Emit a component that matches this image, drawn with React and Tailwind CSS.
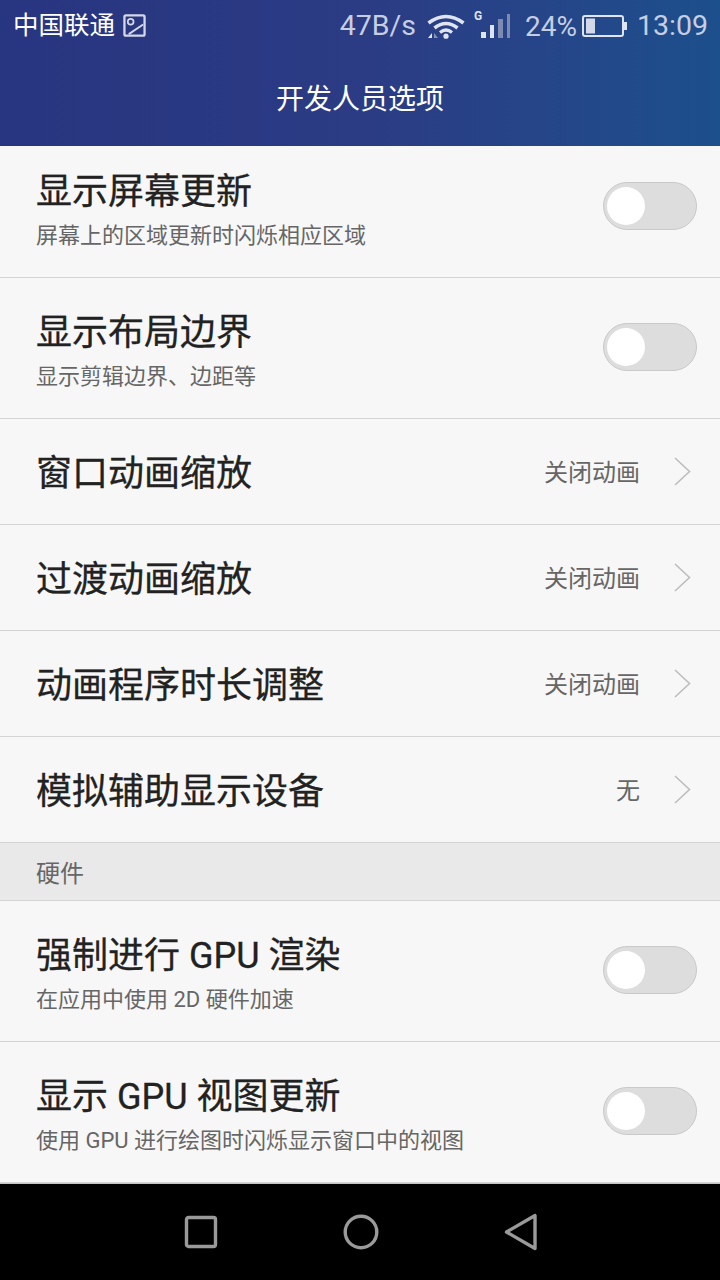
const font = { fontFamily: '"Roboto", "Noto Sans CJK SC", sans-serif' };

const Toggle = ({ lift }) => (
  <div className={`w-[94px] h-[48px] rounded-full bg-[#dddddd] border border-[#c9c9c9] flex items-center pl-[3px] shrink-0 ${lift}`}>
    <div className="w-[38px] h-[38px] rounded-full bg-white" />
  </div>
);

const Chevron = () => (
  <svg width="17" height="29" viewBox="0 0 17 29" className="shrink-0">
    <path d="M1 1 L15.5 14.5 L1 28" fill="none" stroke="#bdbdbd" strokeWidth="1.6" />
  </svg>
);

const SwitchRow = ({ title, sub, height, top, lift }) => (
  <div className={`flex items-center justify-between pl-9 pr-[23px] border-b border-[#d4d4d4] ${height}`}>
    <div className={`flex flex-col ${top}`}>
      <span className="text-[36px] leading-[44px] text-[#222222] [-webkit-text-stroke:0.3px_#222222]">{title}</span>
      <span className="text-[22px] leading-[30px] mt-[7px] text-[#666666]">{sub}</span>
    </div>
    <Toggle lift={lift} />
  </div>
);

const ValueRow = ({ title, value }) => (
  <div className="flex items-center justify-between h-[106px] pl-9 pr-[29px] border-b border-[#d4d4d4]">
    <span className="text-[36px] leading-[44px] pt-1 text-[#222222] [-webkit-text-stroke:0.3px_#222222]">{title}</span>
    <div className="flex items-center gap-[34px]">
      <span className="text-[24px] pt-[3px] text-[#666666]">{value}</span>
      <Chevron />
    </div>
  </div>
);

const StatusBar = () => (
  <div className="h-[50px] flex items-center justify-between pl-[13px] pr-[12px] text-[28.5px]">
    <div className="flex items-center gap-[8px] text-white">
      <span className="text-[25.5px] leading-[50px]">中国联通</span>
      <svg width="23" height="23" viewBox="0 0 24 24" className="opacity-80">
        <rect x="1.5" y="1.5" width="21" height="21" rx="1.5" fill="none" stroke="#fff" strokeWidth="2.4" />
        <circle cx="8" cy="8" r="3" fill="none" stroke="#fff" strokeWidth="1.8" />
        <path d="M6 21 L21 11" fill="none" stroke="#fff" strokeWidth="2" />
      </svg>
    </div>
    <div className="flex items-center text-[#c6cee2]">
      <span className="pt-[3px]">47B/s</span>
      <svg width="38" height="25" viewBox="0 0 38 25" className="ml-[11px] mt-[2px]">
        <path d="M1.5 9 Q19 -4 36.5 9" fill="none" stroke="#dfe4f0" strokeWidth="3.6" />
        <path d="M7.5 14 Q19 5 30.5 14" fill="none" stroke="#dfe4f0" strokeWidth="3.6" />
        <path d="M13 18.5 Q19 13.5 25 18.5" fill="none" stroke="#dfe4f0" strokeWidth="3.2" />
        <circle cx="19" cy="22.2" r="2.6" fill="#dfe4f0" />
        <path d="M5 19 L5 24 L1 24 Z" fill="#dfe4f0" />
        <path d="M7 19 L11 24 L7 24 Z" fill="#8793b5" />
      </svg>
      <svg width="36" height="32" viewBox="0 -4 36 32" className="ml-[9px] -mt-[5px]">
        <text x="0" y="9" fontSize="12" fontWeight="700" fill="#dfe4f0" fontFamily="Roboto, sans-serif">G</text>
        <rect x="7" y="21" width="5" height="6" fill="#dfe4f0" />
        <rect x="16" y="14" width="4" height="13" fill="#dfe4f0" />
        <rect x="24" y="8" width="5" height="19" fill="#7d8bb0" />
        <rect x="33" y="3" width="3" height="24" fill="#7d8bb0" />
      </svg>
      <span className="ml-[15px] pt-[3px] text-[28px]">24%</span>
      <svg width="45" height="22" viewBox="0 0 45 22" className="ml-[5px] mt-[1px]">
        <rect x="1" y="1" width="40" height="20" rx="2" fill="none" stroke="#dfe4f0" strokeWidth="2" />
        <rect x="4" y="3.5" width="9" height="15" fill="#d3d9e8" />
        <rect x="42" y="7" width="3" height="8" fill="#dfe4f0" />
      </svg>
      <span className="ml-[10px] pt-[3px]">13:09</span>
    </div>
  </div>
);

const NavBar = () => (
  <div className="h-[96px] bg-black flex items-center justify-center gap-[125px] pl-[2px] shrink-0">
    <svg width="34" height="34" viewBox="0 0 34 34">
      <rect x="2.5" y="2.5" width="29" height="29" rx="2" fill="none" stroke="#9a9a9a" strokeWidth="3.4" />
    </svg>
    <svg width="36" height="36" viewBox="0 0 36 36">
      <circle cx="18" cy="18" r="15.8" fill="none" stroke="#9a9a9a" strokeWidth="3.4" />
    </svg>
    <svg width="34" height="38" viewBox="0 0 34 38">
      <path d="M2.5 19 L31 2.5 L31 35.5 Z" fill="none" stroke="#9a9a9a" strokeWidth="3.4" strokeLinejoin="round" />
    </svg>
  </div>
);

export default function App() {
  return (
    <div className="w-[720px] h-[1280px] flex flex-col bg-[#f7f7f7] overflow-hidden" style={font}>
      <div className="h-[146px] shrink-0 bg-gradient-to-r from-[#283580] via-[#2b3b84] to-[#1c4f8c]">
        <StatusBar />
        <div className="h-[96px] pt-1 flex items-center justify-center text-white text-[28px]">开发人员选项</div>
      </div>

      <div className="flex-1 border-b border-[#c4c4c4]">
        <SwitchRow title="显示屏幕更新" sub="屏幕上的区域更新时闪烁相应区域" height="h-[132px]" top="-mt-[2px]" lift="-mt-[12px]" />
        <SwitchRow title="显示布局边界" sub="显示剪辑边界、边距等" height="h-[141px]" top="mt-[6px]" lift="-mt-[3px]" />
        <ValueRow title="窗口动画缩放" value="关闭动画" />
        <ValueRow title="过渡动画缩放" value="关闭动画" />
        <ValueRow title="动画程序时长调整" value="关闭动画" />
        <ValueRow title="模拟辅助显示设备" value="无" />
        <div className="h-[58px] pt-1 flex items-center pl-9 bg-[#e9e9e9] border-b border-[#d4d4d4] text-[24px] text-[#666666]">硬件</div>
        <SwitchRow title="强制进行 GPU 渲染" sub="在应用中使用 2D 硬件加速" height="h-[141px]" top="mt-[6px]" lift="-mt-[3px]" />
        <SwitchRow title="显示 GPU 视图更新" sub="使用 GPU 进行绘图时闪烁显示窗口中的视图" height="h-[141px]" top="mt-[6px]" lift="-mt-[3px]" />
      </div>

      <NavBar />
    </div>
  );
}
